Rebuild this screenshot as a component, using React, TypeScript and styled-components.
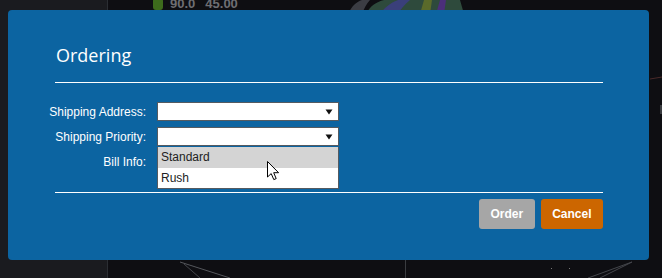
import React from "react";
import styled, { createGlobalStyle } from "styled-components";

const Global = createGlobalStyle`
  html, body { margin: 0; padding: 0; background: #0e0e12; }
  body { font-family: "Liberation Sans", Arial, sans-serif; overflow: hidden; }
`;

const Page = styled.div`
  position: relative;
  width: 662px;
  height: 278px;
  overflow: hidden;
  background: #0e0e12;
`;

const SidePanel = styled.div`
  position: absolute;
  left: 0;
  top: 0;
  width: 107px;
  height: 278px;
  background: #1a1b1f;
  border-right: 1px solid #2b2e33;
`;

const Readout = styled.div`
  position: absolute;
  left: 153px;
  top: -3px;
  display: flex;
  align-items: center;
  font-size: 13px;
  line-height: 14px;
  font-weight: bold;
  color: #6e6f73;
`;

const Dot = styled.span`
  width: 10px;
  height: 12px;
  border-radius: 3px;
  background: #3d6b1c;
  margin-right: 7px;
`;

const Value = styled.span<{ $gap: number }>`
  margin-right: ${(p) => p.$gap}px;
`;

const Blob = styled.svg`
  position: absolute;
  left: 340px;
  top: 0;
`;

const Lines = styled.svg`
  position: absolute;
  left: 0;
  top: 0;
`;

const Modal = styled.div`
  position: absolute;
  left: 8px;
  top: 10px;
  width: 641px;
  height: 250px;
  box-sizing: border-box;
  background: #0c64a1;
  border-radius: 4px;
  padding: 33px 46px 30px 47px;
  display: flex;
  flex-direction: column;
`;

const Title = styled.h2`
  margin: 0 0 15px 1px;
  font-family: "Open Sans", sans-serif;
  font-weight: 400;
  font-size: 18px;
  line-height: 24px;
  color: #ffffff;
`;

const Rule = styled.div<{ $gap: number }>`
  height: 1px;
  background: #ffffff;
  margin-bottom: ${(p) => p.$gap}px;
`;

const Form = styled.div`
  display: grid;
  grid-template-columns: 99px 182px;
  grid-auto-rows: 19px;
  column-gap: 11px;
  row-gap: 6px;
  margin-left: -8px;
  margin-bottom: 21px;
`;

const Label = styled.label`
  font-size: 12px;
  color: #ffffff;
  text-align: right;
  white-space: nowrap;
  align-self: center;
`;

const Field = styled.div`
  position: relative;
  box-sizing: border-box;
  height: 19px;
  background: #ffffff;
  border: 1px solid #555a60;
  display: flex;
  align-items: center;
  justify-content: flex-end;
  padding-right: 5px;
`;

const Empty = styled.div``;

const Options = styled.ul`
  position: absolute;
  left: -1px;
  top: 19px;
  width: 182px;
  box-sizing: border-box;
  margin: 0;
  padding: 0;
  list-style: none;
  background: #ffffff;
  border: 1px solid #555a60;
  border-top: none;
  z-index: 2;
`;

const Option = styled.li<{ $active?: boolean }>`
  height: 20.5px;
  line-height: 20px;
  padding-left: 3px;
  font-size: 12px;
  color: #222;
  background: ${(p) => (p.$active ? "#d4d4d4" : "#ffffff")};
`;

const Actions = styled.div`
  display: flex;
  justify-content: flex-end;
  gap: 6px;
  margin-top: 6px;
`;

const Button = styled.button<{ $tone: "grey" | "orange" }>`
  height: 30px;
  border: none;
  border-radius: 3px;
  padding: 0 11.5px;
  background: ${(p) => (p.$tone === "grey" ? "#a6a6a6" : "#cc6600")};
  color: #ffffff;
  font-family: "Liberation Sans", Arial, sans-serif;
  font-weight: bold;
  font-size: 12px;
`;

const Cursor = styled.svg`
  position: absolute;
  left: 267px;
  top: 161px;
  z-index: 5;
`;

const Arrow = () => (
  <svg width="8" height="6" viewBox="0 0 8 6">
    <path d="M0.5 0.5 H7.5 L4 5.5 Z" fill="#111" />
  </svg>
);

export default function App() {
  return (
    <>
      <Global />
      <Page>
        <SidePanel />
        <Readout>
          <Dot />
          <Value $gap={10}>90.0</Value>
          <Value $gap={0}>45.00</Value>
        </Readout>
        <Blob width="140" height="14" viewBox="0 0 140 14">
          <path d="M8 14 C12 6 16 2 22 0 L30 0 C26 4 24 9 22 14 Z" fill="#3b3d44" />
          <path d="M26 14 C30 6 36 2 44 0 L120 0 L124 14 Z" fill="#2e4a3c" />
          <path d="M40 14 C44 8 50 3 58 0 L70 0 C64 5 60 10 58 14 Z" fill="#3a3f7a" />
          <path d="M80 14 L84 0 L92 0 L90 14 Z" fill="#5a6a2a" />
          <path d="M96 14 L100 0 L106 0 L104 14 Z" fill="#4b2f7a" />
        </Blob>
        <Lines width="662" height="278" viewBox="0 0 662 278">
          <path d="M180 262 L230 278" stroke="#55575c" strokeWidth="1" fill="none" />
          <path d="M184 264 L200 278" stroke="#44464b" strokeWidth="1" fill="none" />
          <path d="M588 278 L632 262 L600 278" stroke="#44464b" strokeWidth="1" fill="none" />
          <line x1="405.5" y1="260" x2="405.5" y2="278" stroke="#3a3c40" />
          <line x1="650" y1="79" x2="662" y2="77" stroke="#4a2a2a" />
          <rect x="660" y="105" width="2" height="9" fill="#3a3c40" />
          <rect x="551" y="268" width="1" height="1" fill="#777" />
          <rect x="569" y="268" width="1" height="1" fill="#777" />
        </Lines>
        <Modal>
          <Title>Ordering</Title>
          <Rule $gap={19} />
          <Form>
            <Label>Shipping Address:</Label>
            <Field>
              <Arrow />
            </Field>
            <Label>Shipping Priority:</Label>
            <Field>
              <Arrow />
              <Options>
                <Option $active>Standard</Option>
                <Option>Rush</Option>
              </Options>
            </Field>
            <Label>Bill Info:</Label>
            <Empty />
          </Form>
          <Rule $gap={0} />
          <Actions>
            <Button $tone="grey">Order</Button>
            <Button $tone="orange">Cancel</Button>
          </Actions>
        </Modal>
        <Cursor width="13" height="20" viewBox="0 0 13 20">
          <path
            d="M0.5 0.5 L0.5 16 L4.2 12.6 L6.8 18.6 L9.2 17.6 L6.7 11.7 L11.6 11.7 Z"
            fill="#ffffff"
            stroke="#000000"
            strokeWidth="1"
            strokeLinejoin="miter"
          />
        </Cursor>
      </Page>
    </>
  );
}
